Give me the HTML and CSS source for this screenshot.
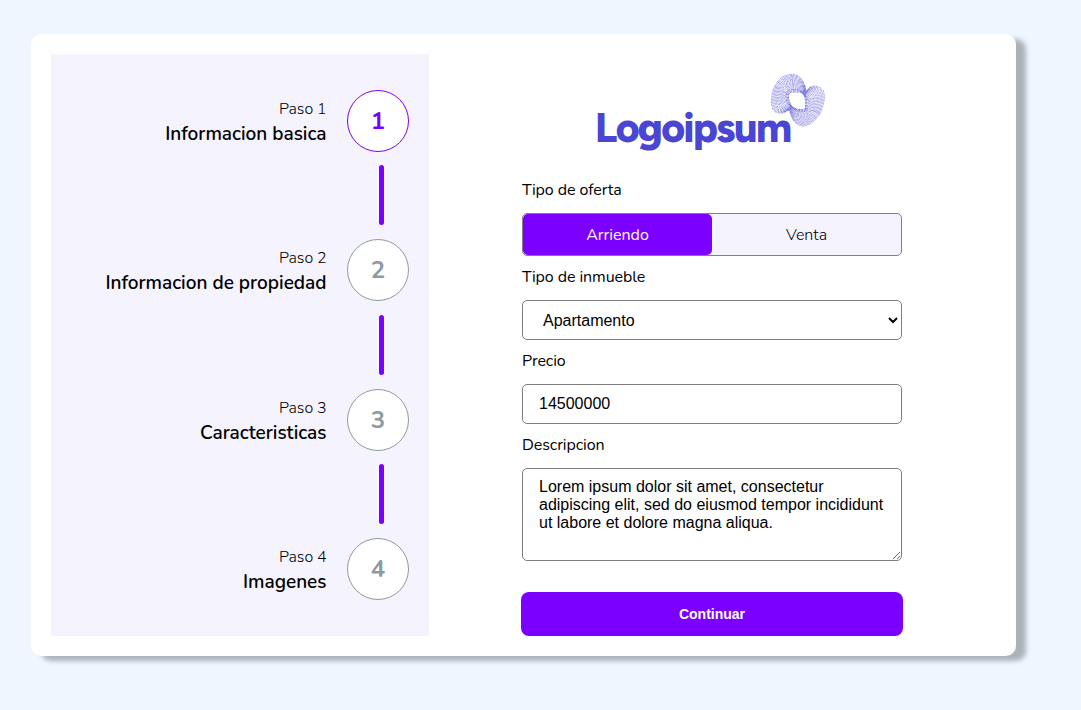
FILE: index.html
```html
<!DOCTYPE html>
<html lang="es">
<head>
<meta charset="utf-8">
<title>Logoipsum</title>
<link rel="stylesheet" href="styles.css">
</head>
<body>
<main class="card">
  <aside class="steps">
    <div class="step active"><div class="step-text"><span class="step-label">Paso 1</span><strong class="step-title">Informacion basica</strong></div><div class="circle">1</div></div>
    <div class="bar"></div>
    <div class="step"><div class="step-text"><span class="step-label">Paso 2</span><strong class="step-title">Informacion de propiedad</strong></div><div class="circle">2</div></div>
    <div class="bar"></div>
    <div class="step"><div class="step-text"><span class="step-label">Paso 3</span><strong class="step-title">Caracteristicas</strong></div><div class="circle">3</div></div>
    <div class="bar"></div>
    <div class="step"><div class="step-text"><span class="step-label">Paso 4</span><strong class="step-title">Imagenes</strong></div><div class="circle">4</div></div>
  </aside>
  <form class="form">
    <svg class="logo" viewBox="0 0 240 90" role="img" aria-label="Logoipsum">
      <text class="logo-text" x="1" y="77.3" textLength="197" lengthAdjust="spacing">Logoipsum</text>
      <g id="swirl" class="swirl" transform="translate(165.5 1.3) scale(.33333)"></g>
    </svg>
    <label class="label">Tipo de oferta</label>
    <div class="toggle"><div class="option selected">Arriendo</div><div class="option">Venta</div></div>
    <label class="label" for="kind">Tipo de inmueble</label>
    <select class="field select" id="kind"><option>Apartamento</option></select>
    <label class="label" for="price">Precio</label>
    <input class="field" id="price" value="14500000">
    <label class="label" for="desc">Descripcion</label>
    <textarea class="field area" id="desc">Lorem ipsum dolor sit amet, consectetur adipiscing elit, sed do eiusmod tempor incididunt ut labore et dolore magna aliqua.</textarea>
    <button class="submit" type="button">Continuar</button>
  </form>
</main>
<script src="swirl.js"></script>
</body>
</html>
```
FILE: swirl.js
```js
// Dotted rings that morph from the two-lobed outline to the central opening.
const outer = [[97,24],[122,34],[136,58],[140,74],[152,63],[170,60],[190,72],[194,100],[182,140],[158,168],[130,179],[106,168],[95,148],[88,132],[75,138],[60,140],[42,132],[36,105],[42,68],[65,35]];
const inner = [[105,77],[116,77],[126,79],[133,85],[136,92],[137,98],[138,104],[138,112],[138,120],[137,127],[128,129],[118,129],[108,127],[98,121],[93,114],[90,107],[88,100],[87,92],[87,84],[93,78]];
const rings = 15;
const swirl = document.getElementById("swirl");
for (let r = 0; r < rings; r++) {
  const t = r / (rings - 1);
  const p = outer.map((o, i) => [o[0] + (inner[i][0] - o[0]) * t, o[1] + (inner[i][1] - o[1]) * t]);
  const n = p.length;
  let d = `M${p[0]}`;
  for (let i = 0; i < n; i++) {
    const a = p[(i + n - 1) % n], b = p[i], c = p[(i + 1) % n], e = p[(i + 2) % n];
    d += `C${b[0] + (c[0] - a[0]) / 6},${b[1] + (c[1] - a[1]) / 6} ${c[0] - (e[0] - b[0]) / 6},${c[1] - (e[1] - b[1]) / 6} ${c}`;
  }
  const path = document.createElementNS("http://www.w3.org/2000/svg", "path");
  path.setAttribute("d", d + "Z");
  if (t > 0.85) path.setAttribute("class", "rim");
  swirl.appendChild(path);
}
```
FILE: styles.css
```css
* { box-sizing: border-box; }
body {
  margin: 0;
  padding: 34px 0 0 31px;
  height: 710px;
  overflow: hidden;
  background: #eef6ff;
  color: #000;
  font-family: Nunito, Lato, sans-serif;
}
.card {
  display: flex;
  width: 985px;
  height: 622px;
  padding: 20px;
  background: #fff;
  border-radius: 10px;
  box-shadow: 10px 5px 5px 0 rgba(0, 0, 0, .28);
}
.steps {
  width: 378px;
  padding: 36px 20px 0 0;
  background: #f5f3fe;
}
.step {
  display: flex;
  justify-content: flex-end;
  gap: 20.5px;
  height: 62px;
}
.step-text {
  display: flex;
  flex-direction: column;
  align-items: flex-end;
  padding-top: 7px;
}
.step-label { font-size: 16px; line-height: 25px; font-weight: 300; letter-spacing: -.1px; }
.step-title { font-size: 19px; line-height: 25px; font-weight: 630; }
.circle {
  width: 62px;
  height: 62px;
  border: 1px solid #8d9ba0;
  border-radius: 50%;
  background: #fff;
  color: #8d9ba0;
  font-size: 24px;
  font-weight: 700;
  line-height: 60px;
  text-align: center;
}
.active .circle { border-color: #7b00ff; color: #7b00ff; }
.bar {
  width: 5px;
  height: 60px;
  margin: 13.4px 25px 13.95px auto;
  border-radius: 3px;
  background: #7b00ff;
}
.form {
  display: flex;
  flex-direction: column;
  width: 380px;
  margin-left: 93px;
}
.logo { width: 240px; height: 90px; margin: 11px 0 14px 72px; }
.logo-text { font: 800 41px Figtree, Outfit, "DM Sans", Nunito, sans-serif; fill: #4a45d2; }
.swirl {
  fill: none;
  stroke: #4a45d2;
  stroke-width: 2.4;
  stroke-linecap: round;
  stroke-dasharray: .1 4.4;
  opacity: .85;
}
.rim { stroke-width: 3.2; }
.label { height: 44px; font-size: 16px; line-height: 42px; letter-spacing: -.08px; font-weight: 380; }
.toggle {
  display: flex;
  height: 43px;
  border: 1px solid #808080;
  border-radius: 5px;
  background: #f5f3fe;
}
.option {
  flex: 1;
  border-radius: 5px;
  font-size: 16px;
  line-height: 42px;
  font-weight: 350;
  text-align: center;
}
.selected { background: #7b00ff; color: #fff; font-weight: 400; }
.field {
  width: 380px;
  height: 40px;
  margin: 0;
  padding: 0 16px;
  border: 1px solid #808080;
  border-radius: 5px;
  background: #fff;
  color: #000;
  font: 16px "Liberation Sans", sans-serif;
}
.select { padding: 0 0 0 16px; }
.area { height: 93px; padding: 9px 16px; line-height: 18px; }
.submit {
  width: 382px;
  height: 44px;
  margin: 31px 0 0 -1px;
  border: 0;
  border-radius: 8px;
  background: #7b00ff;
  color: #fff;
  font: 700 14px "Liberation Sans", sans-serif;
}
```
